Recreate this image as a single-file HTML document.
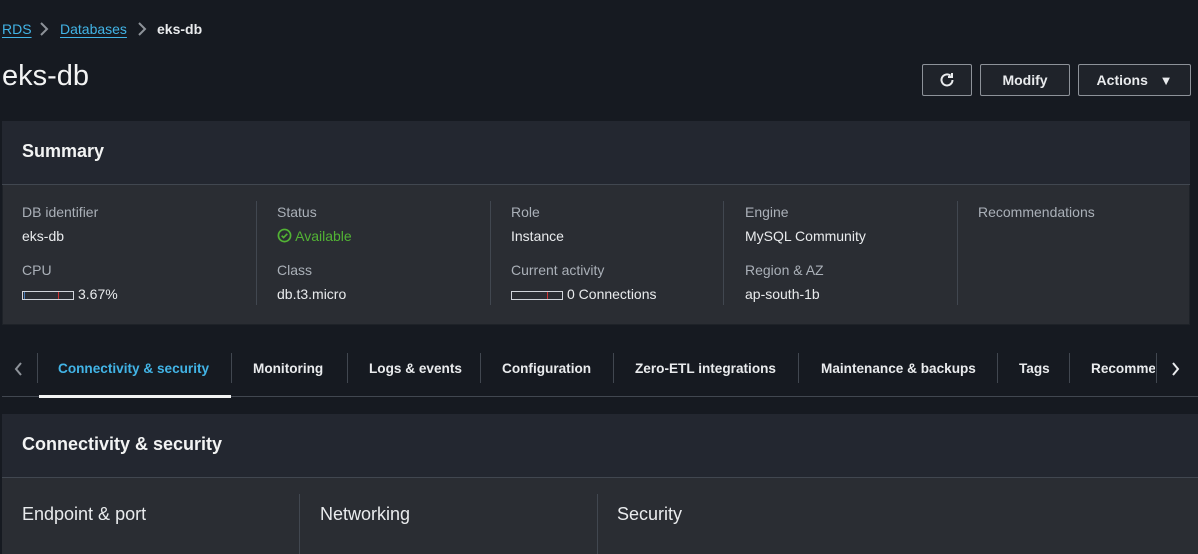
<!DOCTYPE html>
<html><head><style>
*{margin:0;padding:0;box-sizing:border-box}
body{width:1198px;height:549px;background:#161a21;font-family:"Liberation Sans",Arial,sans-serif;color:#d1d5db;position:relative;overflow:hidden;font-size:14px}
.a{position:absolute;white-space:nowrap}
.lnk{color:#42b4e6;text-decoration:underline;text-underline-offset:3px}
.btn{position:absolute;top:64px;height:32px;border:1px solid #8d9299;border-radius:2px;background:#1f232a;color:#e9ebed;font-weight:bold;font-size:14px;display:flex;align-items:center;justify-content:center}
.lbl{color:#aab0b8;font-size:14px}
.val{color:#e9ebed;font-size:14px}
.sep{position:absolute;width:1px;background:#414750}
.bar{display:inline-block;width:52px;height:9px;border:1px solid #d1d5db;vertical-align:middle;margin-right:4px;position:relative}
.tab{position:absolute;top:361px;font-weight:bold;font-size:13.6px;color:#e9ebed}
.tsep{position:absolute;top:353px;height:30px;width:1px;background:#414750}
</style></head><body>
<div class="a" style="left:2px;top:21px"><span class="lnk">RDS</span></div>
<svg class="a" style="left:38px;top:22px" width="12" height="14" viewBox="0 0 12 14" fill="none" stroke="#8d9299" stroke-width="2"><path d="M3 1l6 6-6 6"/></svg>
<div class="a" style="left:60px;top:21px"><span class="lnk">Databases</span></div>
<svg class="a" style="left:136px;top:22px" width="12" height="14" viewBox="0 0 12 14" fill="none" stroke="#8d9299" stroke-width="2"><path d="M3 1l6 6-6 6"/></svg>
<div class="a" style="left:157px;top:21px;font-weight:bold;color:#e9ebed">eks-db</div>
<div class="a" style="left:2px;top:60px;font-size:29px;color:#f2f3f3">eks-db</div>
<div class="btn" style="left:922px;width:50px"><svg width="18" height="18" viewBox="0 0 18 18" fill="none" stroke="#e9ebed" stroke-width="2"><path d="M14.5 9a5.5 5.5 0 1 1-2-4.3"/><path d="M14 2v4h-4" fill="none"/></svg></div>
<div class="btn" style="left:980px;width:90px">Modify</div>
<div class="btn" style="left:1078px;width:113px">Actions&nbsp;&nbsp;&nbsp;<span style="font-size:13px">&#9660;</span></div>

<div class="a" style="left:2px;top:121px;width:1188px;height:204px;background:#2a2d33;border:1px solid #1e2228"></div>
<div class="a" style="left:2px;top:121px;width:1188px;height:64px;background:#232730;border-bottom:1px solid #414750"></div>
<div class="a" style="left:22px;top:141px;font-size:18px;font-weight:bold;color:#f2f3f3">Summary</div>
<div class="sep" style="left:256px;top:201px;height:104px"></div>
<div class="sep" style="left:490px;top:201px;height:104px"></div>
<div class="sep" style="left:723px;top:201px;height:104px"></div>
<div class="sep" style="left:957px;top:201px;height:104px"></div>
<div class="a lbl" style="left:22px;top:204px">DB identifier</div>
<div class="a val" style="left:22px;top:228px">eks-db</div>
<div class="a lbl" style="left:22px;top:262px">CPU</div>
<div class="a val" style="left:22px;top:286px"><span class="bar"><span style="position:absolute;left:1px;top:0;width:1px;height:7px;background:#4a7ebb"></span><span style="position:absolute;left:35px;top:0;width:1px;height:7px;background:#c33"></span></span>3.67%</div>
<div class="a lbl" style="left:277px;top:204px">Status</div>
<div class="a" style="left:277px;top:228px;color:#52b334"><svg width="15" height="15" viewBox="0 0 16 16" style="vertical-align:-2px" fill="none" stroke="#52b334" stroke-width="1.8"><circle cx="8" cy="8" r="6.5"/><path d="M5 8.2l2 2 4-4"/></svg> Available</div>
<div class="a lbl" style="left:277px;top:262px">Class</div>
<div class="a val" style="left:277px;top:286px">db.t3.micro</div>
<div class="a lbl" style="left:511px;top:204px">Role</div>
<div class="a val" style="left:511px;top:228px">Instance</div>
<div class="a lbl" style="left:511px;top:262px">Current activity</div>
<div class="a val" style="left:511px;top:286px"><span class="bar"><span style="position:absolute;left:35px;top:0;width:1px;height:7px;background:#c33"></span></span>0 Connections</div>
<div class="a lbl" style="left:745px;top:204px">Engine</div>
<div class="a val" style="left:745px;top:228px">MySQL Community</div>
<div class="a lbl" style="left:745px;top:262px">Region &amp; AZ</div>
<div class="a val" style="left:745px;top:286px">ap-south-1b</div>
<div class="a lbl" style="left:978px;top:204px">Recommendations</div>

<svg class="a" style="left:13px;top:362px" width="12" height="14" viewBox="0 0 12 14" fill="none" stroke="#8d9299" stroke-width="2"><path d="M8 1L3 7l5 6"/></svg>
<div class="tsep" style="left:37px"></div>
<div class="tab" style="left:58px;color:#42b4e6">Connectivity &amp; security</div>
<div class="tsep" style="left:231px"></div>
<div class="tab" style="left:253px">Monitoring</div>
<div class="tsep" style="left:347px"></div>
<div class="tab" style="left:369px">Logs &amp; events</div>
<div class="tsep" style="left:480px"></div>
<div class="tab" style="left:502px">Configuration</div>
<div class="tsep" style="left:613px"></div>
<div class="tab" style="left:635px">Zero-ETL integrations</div>
<div class="tsep" style="left:798px"></div>
<div class="tab" style="left:821px">Maintenance &amp; backups</div>
<div class="tsep" style="left:997px"></div>
<div class="tab" style="left:1019px">Tags</div>
<div class="tsep" style="left:1069px"></div>
<div class="tab" style="left:1091px;width:64px;overflow:hidden">Recommendations</div>
<div class="tsep" style="left:1156px"></div>
<svg class="a" style="left:1169px;top:362px" width="12" height="14" viewBox="0 0 12 14" fill="none" stroke="#e9ebed" stroke-width="2"><path d="M4 1l5 6-5 6"/></svg>
<div class="a" style="left:2px;top:396px;width:1196px;height:1px;background:#414750"></div>
<div class="a" style="left:39px;top:395px;width:192px;height:3px;background:#f2f3f3"></div>

<div class="a" style="left:2px;top:414px;width:1196px;height:140px;background:#2a2d33"></div>
<div class="a" style="left:2px;top:414px;width:1196px;height:64px;background:#232730;border-bottom:1px solid #414750"></div>
<div class="a" style="left:22px;top:434px;font-size:18px;font-weight:bold;color:#f2f3f3">Connectivity &amp; security</div>
<div class="sep" style="left:299px;top:494px;height:60px"></div>
<div class="sep" style="left:597px;top:494px;height:60px"></div>
<div class="a" style="left:22px;top:504px;font-size:18px;color:#e9ebed">Endpoint &amp; port</div>
<div class="a" style="left:320px;top:504px;font-size:18px;color:#e9ebed">Networking</div>
<div class="a" style="left:617px;top:504px;font-size:18px;color:#e9ebed">Security</div>
</body></html>
